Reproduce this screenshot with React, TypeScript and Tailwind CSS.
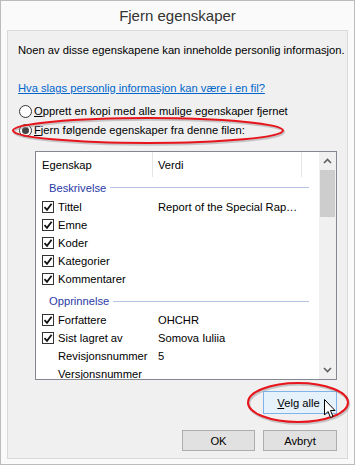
import React from 'react';

const font = "font-['Liberation_Sans',Arial,sans-serif]";

function Check() {
  return (
    <span className="w-[12px] h-[12px] border border-[#333] bg-white flex items-center justify-center flex-shrink-0">
      <svg width="10" height="10" viewBox="0 0 10 10">
        <path d="M1.5 5.2 L4 7.8 L8.6 1.8" fill="none" stroke="#111" strokeWidth="1.8" />
      </svg>
    </span>
  );
}

function Radio({ on }: { on?: boolean }) {
  return (
    <span className="w-[13px] h-[13px] rounded-full border border-[#333] bg-white flex items-center justify-center flex-shrink-0">
      {on && <span className="w-[7px] h-[7px] rounded-full bg-[#444]" />}
    </span>
  );
}

interface Row {
  name: string;
  value?: string;
  checked: boolean;
}

const desc: Row[] = [
  { name: 'Tittel', value: 'Report of the Special Rap…', checked: true },
  { name: 'Emne', checked: true },
  { name: 'Koder', checked: true },
  { name: 'Kategorier', checked: true },
  { name: 'Kommentarer', checked: true },
];

const origin: Row[] = [
  { name: 'Forfattere', value: 'OHCHR', checked: true },
  { name: 'Sist lagret av', value: 'Somova Iuliia', checked: true },
  { name: 'Revisjonsnummer', value: '5', checked: false },
  { name: 'Versjonsnummer', checked: false },
];

function PropRow({ row }: { row: Row }) {
  return (
    <div className="h-[18px] flex-shrink-0 flex items-center">
      <div className="w-[117px] flex items-center pl-[6px] gap-[4px]">
        {row.checked ? <Check /> : <span className="w-[12px]" />}
        <span className="whitespace-nowrap">{row.name}</span>
      </div>
      <span className="pl-[5px] whitespace-nowrap">{row.value}</span>
    </div>
  );
}

function Group({ label, className }: { label: string; className: string }) {
  return (
    <div className={`flex items-center pl-[13px] pr-[10px] gap-[4px] flex-shrink-0 ${className}`}>
      <span className="text-[#2a3aa6]">{label}</span>
      <span className="flex-1 h-px bg-[#b4c2e6]" />
    </div>
  );
}

export default function App() {
  return (
    <div className={`w-[355px] h-[466px] bg-white relative text-[11.2px] leading-[16px] text-black ${font}`}>
      <div className="w-[355px] h-[465px] border border-[#bcbcbc] bg-[#fafafa] flex flex-col">
        <div className="h-[29px] flex items-center justify-center text-[15px] text-[#333]">
          Fjern egenskaper
        </div>

        <div className="mx-[6px] h-[429px] border border-[#dadada] bg-[#f0f0f0] flex flex-col">
          <p className="mt-[11px] pl-[10px] whitespace-nowrap">
            Noen av disse egenskapene kan inneholde personlig informasjon.
          </p>
          <a className="mt-[22px] ml-[10px] self-start text-[#0066cc] underline whitespace-nowrap">
            Hva slags personlig informasjon kan være i en fil?
          </a>

          <div className="mt-[7px] pl-[11px] flex items-center gap-[2px] whitespace-nowrap">
            <Radio />
            <span><u>O</u>pprett en kopi med alle mulige egenskaper fjernet</span>
          </div>
          <div className="mt-[3px] pl-[11px] flex items-center gap-[2px] whitespace-nowrap">
            <Radio on />
            <span><u>F</u>jern følgende egenskaper fra denne filen:</span>
          </div>

          {/* property list */}
          <div className="mt-[13px] ml-[27px] w-[302px] h-[229px] border border-[#828790] bg-white flex overflow-hidden">
            <div className="flex-1 flex flex-col overflow-hidden">
              <div className="h-[25px] flex items-center flex-shrink-0">
                <div className="w-[117px] h-full flex items-center pl-[6px] border-r border-[#e5e5e5]">Egenskap</div>
                <div className="w-[149px] h-full flex items-center pl-[5px] border-r border-[#e5e5e5]">Verdi</div>
                <div className="flex-1" />
              </div>
              <Group label="Beskrivelse" className="h-[21px]" />
              {desc.map((r) => (
                <PropRow key={r.name} row={r} />
              ))}
              <Group label="Opprinnelse" className="h-[23px] pt-[3px]" />
              {origin.map((r) => (
                <PropRow key={r.name} row={r} />
              ))}
            </div>
            {/* scrollbar */}
            <div className="w-[17px] bg-[#f0f0f0] flex flex-col items-center flex-shrink-0">
              <div className="h-[18px] w-full flex items-center justify-center">
                <svg width="9" height="6" viewBox="0 0 9 6">
                  <path d="M1 5 L4.5 1.5 L8 5" fill="none" stroke="#606060" strokeWidth="1.6" />
                </svg>
              </div>
              <div className="w-[15px] h-[47px] bg-[#cdcdcd]" />
              <div className="flex-1" />
              <div className="h-[18px] w-full flex items-center justify-center">
                <svg width="9" height="6" viewBox="0 0 9 6">
                  <path d="M1 1 L4.5 4.5 L8 1" fill="none" stroke="#606060" strokeWidth="1.6" />
                </svg>
              </div>
            </div>
          </div>

          <div className="mt-[11px] mr-[10px] flex justify-end">
            <button className="w-[74px] h-[23px] border border-[#7eb4ea] bg-[#e5f1fb] flex items-center justify-center pr-[3px]">
              <span><u>V</u>elg alle</span>
            </button>
          </div>

          <div className="mt-[16px] mr-[10px] flex justify-end gap-[8px]">
            <button className="w-[73px] h-[21px] border border-[#adadad] bg-[#e1e1e1] flex items-center justify-center">
              OK
            </button>
            <button className="w-[74px] h-[21px] border border-[#adadad] bg-[#e1e1e1] flex items-center justify-center">
              Avbryt
            </button>
          </div>
        </div>
      </div>

      {/* red highlight ellipses */}
      <svg className="absolute left-0 top-0 pointer-events-none" width="355" height="466">
        <ellipse cx="149" cy="132" rx="135" ry="12.5" fill="none" stroke="#999" strokeOpacity="0.5" strokeWidth="2.5" />
        <ellipse cx="148" cy="130.5" rx="135" ry="12.5" fill="none" stroke="#e8141b" strokeWidth="2" />
        <ellipse cx="299" cy="404" rx="50" ry="19.5" fill="none" stroke="#999" strokeOpacity="0.5" strokeWidth="2.5" />
        <ellipse cx="298" cy="402.5" rx="50" ry="19.5" fill="none" stroke="#e8141b" strokeWidth="2" />
        {/* mouse pointer */}
        <path
          d="M324.5 399.5 L324.5 415 L328 411.5 L330.5 417.5 L333 416.5 L330.5 410.5 L335 410.5 Z"
          fill="#fff"
          stroke="#000"
          strokeWidth="1"
          strokeLinejoin="round"
        />
      </svg>
    </div>
  );
}
